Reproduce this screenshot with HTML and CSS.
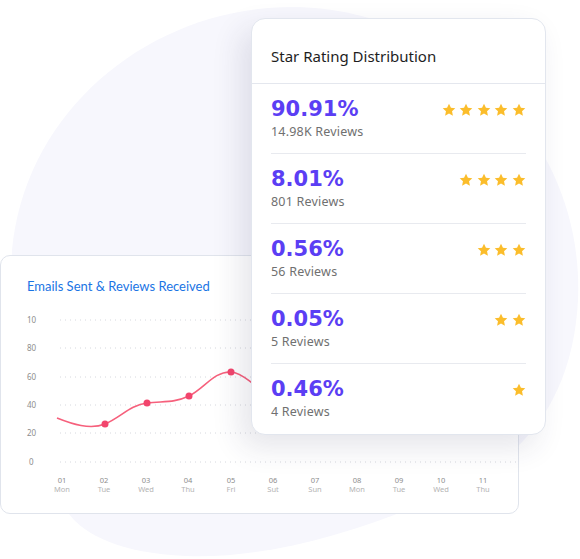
FILE: index.html
```html
<!DOCTYPE html>
<html lang="en">
<head>
    <meta charset="UTF-8">
    <meta name="viewport" content="width=device-width, initial-scale=1.0">
    <title>Star Rating Distribution</title>
    <link rel="stylesheet" href="styles.css">
</head>
<body>
    <!-- soft background blob -->
    <svg class="blob" width="580" height="559" viewBox="0 0 580 559">
        <path d="M12,250 C25,110 150,8 290,7 C440,6 585,130 578,300 C574,380 540,440 480,475 C400,520 280,560 186,556 C120,553 85,535 69,514 C40,470 8,380 12,250 Z" fill="#f7f7fd"/>
    </svg>

    <div class="stage">
        <!-- rating card -->
        <div class="rating-card">
            <div class="rating-header">Star Rating Distribution</div>
            <div class="rating-list">
                <div class="rating-row">
                    <div>
                        <div class="rating-pct">90.91%</div>
                        <div class="rating-count">14.98K Reviews</div>
                    </div>
                    <div class="stars" data-n="5"></div>
                </div>
                <div class="rating-row">
                    <div>
                        <div class="rating-pct">8.01%</div>
                        <div class="rating-count">801 Reviews</div>
                    </div>
                    <div class="stars" data-n="4"></div>
                </div>
                <div class="rating-row">
                    <div>
                        <div class="rating-pct">0.56%</div>
                        <div class="rating-count">56 Reviews</div>
                    </div>
                    <div class="stars" data-n="3"></div>
                </div>
                <div class="rating-row">
                    <div>
                        <div class="rating-pct">0.05%</div>
                        <div class="rating-count">5 Reviews</div>
                    </div>
                    <div class="stars" data-n="2"></div>
                </div>
                <div class="rating-row">
                    <div>
                        <div class="rating-pct">0.46%</div>
                        <div class="rating-count">4 Reviews</div>
                    </div>
                    <div class="stars" data-n="1"></div>
                </div>
            </div>
        </div>

        <!-- chart card -->
        <div class="chart-card">
            <div class="chart-title">Emails Sent &amp; Reviews Received</div>
            <svg class="chart" width="517" height="190" viewBox="0 0 517 190">
                <g class="grid">
                    <line x1="58" y1="10" x2="518" y2="10"/>
                    <line x1="58" y1="38" x2="518" y2="38"/>
                    <line x1="58" y1="67" x2="518" y2="67"/>
                    <line x1="58" y1="95" x2="518" y2="95"/>
                    <line x1="58" y1="123" x2="518" y2="123"/>
                    <line x1="58" y1="152" x2="518" y2="152"/>
                </g>
                <g class="y-labels">
                    <text x="25" y="13">10</text>
                    <text x="25" y="41">80</text>
                    <text x="25" y="70">60</text>
                    <text x="25" y="98">40</text>
                    <text x="25" y="126">20</text>
                    <text x="27" y="155">0</text>
                </g>
                <g class="x-labels">
                    <text x="60" y="173">01</text><text class="day" x="60" y="182">Mon</text>
                    <text x="102" y="173">02</text><text class="day" x="102" y="182">Tue</text>
                    <text x="144" y="173">03</text><text class="day" x="144" y="182">Wed</text>
                    <text x="186" y="173">04</text><text class="day" x="186" y="182">Thu</text>
                    <text x="229" y="173">05</text><text class="day" x="229" y="182">Fri</text>
                    <text x="271" y="173">06</text><text class="day" x="271" y="182">Sut</text>
                    <text x="313" y="173">07</text><text class="day" x="313" y="182">Sun</text>
                    <text x="355" y="173">08</text><text class="day" x="355" y="182">Mon</text>
                    <text x="397" y="173">09</text><text class="day" x="397" y="182">Tue</text>
                    <text x="439" y="173">10</text><text class="day" x="439" y="182">Wed</text>
                    <text x="481" y="173">11</text><text class="day" x="481" y="182">Thu</text>
                </g>
                <path class="line" d="M55,108 C70,114 88,120 103,114 C118,108 128,95 145,93 C162,91 172,93 187,86 C202,79 212,61 229,62 C240,63 252,74 275,95"/>
                <g class="dots">
                    <circle cx="103" cy="114" r="3.5"/>
                    <circle cx="145" cy="93" r="3.5"/>
                    <circle cx="187" cy="86" r="3.5"/>
                    <circle cx="229" cy="62" r="3.5"/>
                </g>
            </svg>
        </div>
    </div>

    <script>
        // fill star rows
        const starSvg = '<svg width="14" height="14" viewBox="0 0 24 24"><path d="M12 1.2l3.3 7 7.5.9-5.6 5.2 1.5 7.5L12 18.1l-6.7 3.7 1.5-7.5L1.2 9.1l7.5-.9z" fill="#fbbd2b"/></svg>';
        document.querySelectorAll('.stars').forEach(function (el) {
            el.innerHTML = starSvg.repeat(parseInt(el.dataset.n));
        });
    </script>
</body>
</html>
```

FILE: styles.css
```css
body {
    margin: 0;
    background-color: #fff;
    font-family: "Noto Sans", Arial, sans-serif;
    width: 580px;
    height: 559px;
    overflow: hidden;
    position: relative;
}
.blob {
    position: absolute;
    left: 0;
    top: 0;
}
.stage {
    position: relative;
    display: grid;
    grid-template-columns: 2px 249px 268px 27px;
    grid-template-rows: 18px 237px 180px 79px;
}
.rating-card {
    grid-column: 3 / 5;
    grid-row: 2 / 4;
    z-index: 2;
    background-color: #fff;
    border: 1px solid #e2e6ee;
    border-radius: 14px;
    box-shadow: -10px 12px 30px rgba(40, 45, 80, 0.12);
    box-sizing: border-box;
}
.rating-header {
    height: 65px;
    box-sizing: border-box;
    padding: 9px 19px 0;
    display: flex;
    align-items: center;
    font-size: 15px;
    color: #1e1e1e;
    border-bottom: 1px solid #e4e7ee;
}
.rating-list {
    margin: 0 19px;
}
.rating-row {
    height: 70px;
    box-sizing: border-box;
    display: flex;
    justify-content: space-between;
    align-items: flex-start;
    padding-top: 13px;
    border-bottom: 1px solid #e8eaef;
}
.rating-row:last-child {
    border-bottom: none;
}
.rating-pct {
    font-family: "DejaVu Sans", sans-serif;
    font-weight: bold;
    font-size: 21px;
    line-height: 24px;
    color: #5b3ef4;
}
.rating-count {
    font-size: 12.5px;
    line-height: 22px;
    color: #707070;
    letter-spacing: 0.2px;
}
.stars {
    display: flex;
    gap: 3.6px;
    padding-top: 6px;
}
.stars svg {
    display: block;
}
.chart-card {
    grid-column: 2 / 4;
    grid-row: 3 / 5;
    z-index: 1;
    background-color: #fff;
    border: 1px solid #e0e4ec;
    border-radius: 10px;
    box-sizing: border-box;
    margin-left: -2px;
}
.chart-title {
    padding: 22px 0 0 26px;
    height: 54px;
    box-sizing: border-box;
    font-family: Lato, sans-serif;
    font-size: 13px;
    color: #1a74e4;
}
.chart {
    display: block;
    margin-left: 1px;
}
.grid line {
    stroke: #d6d8de;
    stroke-width: 1;
    stroke-dasharray: 1 4;
}
.y-labels text {
    font-family: "Noto Sans", sans-serif;
    font-size: 8px;
    fill: #8d8d8d;
}
.x-labels text {
    font-family: "Noto Sans", sans-serif;
    font-size: 7.5px;
    fill: #8d8d8d;
    text-anchor: middle;
}
.x-labels .day {
    fill: #b3b3b3;
}
.line {
    fill: none;
    stroke: #f6607c;
    stroke-width: 1.6;
}
.dots circle {
    fill: #f2456d;
}
```
